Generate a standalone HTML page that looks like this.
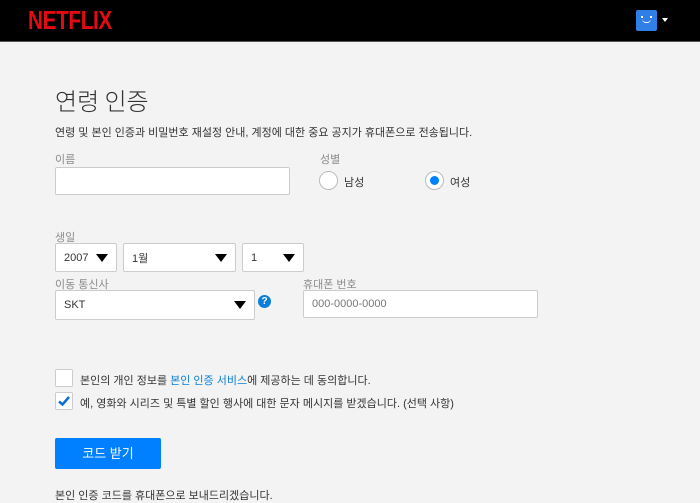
<!DOCTYPE html><html><head><meta charset="utf-8"><style>
*{margin:0;padding:0;box-sizing:border-box}
body{width:700px;height:500px;background:#f3f3f3;font-family:"Liberation Sans","Noto Sans CJK KR",sans-serif;position:relative;overflow:hidden;color:#333}
.a{position:absolute}
.hdr{left:0;top:0;width:700px;height:42px;background:#000;border-bottom:1px solid #555}
.logo{left:28px;top:5px;color:#e50914;font-family:"Liberation Sans Narrow","Liberation Sans",sans-serif;font-weight:bold;font-size:26px;transform:scaleX(.8);transform-origin:left;letter-spacing:-0.5px}
.lbl{font-size:11px;color:#8c8c8c}
.box{background:#fff;border:1px solid #ccc;border-radius:2px}
.sel{font-size:11px;color:#333;padding-left:8px;display:flex;align-items:center}
.tri{position:absolute;right:8px;top:50%;margin-top:-4px;border-left:6px solid transparent;border-right:6px solid transparent;border-top:8px solid #000}
.radio{width:19px;height:19px;border-radius:50%;background:#fff;border:1px solid #bbb}
.t{font-size:11px;color:#333}
</style></head><body>
<div class="a hdr"></div>
<div class="a logo">NETFLIX</div>
<div class="a" style="left:636px;top:10px;width:21px;height:21px;background:#2f7fe6;border-radius:2px">
<div class="a" style="left:5px;top:6px;width:2px;height:2px;background:#fff"></div>
<div class="a" style="left:14px;top:6px;width:2px;height:2px;background:#fff"></div>
<div class="a" style="left:6px;top:9px;width:9px;height:4px;border-bottom:1px solid #fff;border-radius:0 0 5px 5px"></div></div>
<div class="a" style="left:662px;top:18px;border-left:3px solid transparent;border-right:3px solid transparent;border-top:4px solid #fff"></div>

<div class="a" style="left:55px;top:82px;font-size:24px;color:#333;font-family:'Noto Sans CJK KR',sans-serif;font-weight:300">연령 인증</div>
<div class="a t" style="left:55px;top:124px">연령 및 본인 인증과 비밀번호 재설정 안내, 계정에 대한 중요 공지가 휴대폰으로 전송됩니다.</div>

<div class="a lbl" style="left:55px;top:151px">이름</div>
<div class="a box" style="left:55px;top:167px;width:235px;height:28px"></div>
<div class="a lbl" style="left:320px;top:151px">성별</div>
<div class="a radio" style="left:319px;top:171px"></div>
<div class="a t" style="left:344px;top:174px">남성</div>
<div class="a radio" style="left:425px;top:171px"><div class="a" style="left:4px;top:4px;width:9px;height:9px;border-radius:50%;background:#0080ff"></div></div>
<div class="a t" style="left:450px;top:174px">여성</div>

<div class="a lbl" style="left:55px;top:229px">생일</div>
<div class="a box sel" style="left:55px;top:243px;width:62px;height:29px">2007<span class="tri"></span></div>
<div class="a box sel" style="left:123px;top:243px;width:113px;height:29px">1월<span class="tri"></span></div>
<div class="a box sel" style="left:242px;top:243px;width:62px;height:29px">1<span class="tri"></span></div>

<div class="a lbl" style="left:55px;top:276px">이동 통신사</div>
<div class="a box sel" style="left:55px;top:290px;width:200px;height:30px">SKT<span class="tri"></span></div>
<div class="a" style="left:258px;top:295px;width:13px;height:13px;border-radius:50%;background:#0a7fd8;color:#fff;font-size:10px;font-weight:bold;text-align:center;line-height:13px">?</div>
<div class="a lbl" style="left:303px;top:276px">휴대폰 번호</div>
<div class="a box" style="left:303px;top:290px;width:235px;height:28px;font-size:11px;color:#777;padding:7px 0 0 8px">000-0000-0000</div>

<div class="a box" style="left:55px;top:369px;width:18px;height:18px"></div>
<div class="a t" style="left:80px;top:372px">본인의 개인 정보를 <span style="color:#0a7fd8">본인 인증 서비스</span>에 제공하는 데 동의합니다.</div>
<div class="a box" style="left:55px;top:392px;width:18px;height:18px"><svg width="16" height="16" viewBox="0 0 16 16" style="position:absolute;left:0;top:0"><path d="M3 8.5 L6.5 11.5 L13 4" stroke="#0a6fd8" stroke-width="2.5" fill="none"/></svg></div>
<div class="a t" style="left:80px;top:395px">예, 영화와 시리즈 및 특별 할인 행사에 대한 문자 메시지를 받겠습니다. (선택 사항)</div>

<div class="a" style="left:55px;top:438px;width:106px;height:31px;background:#0080ff;border-radius:2px;color:#fff;font-size:13px;text-align:center;line-height:31px">코드 받기</div>
<div class="a t" style="left:55px;top:487px">본인 인증 코드를 휴대폰으로 보내드리겠습니다.</div>
</body></html>
